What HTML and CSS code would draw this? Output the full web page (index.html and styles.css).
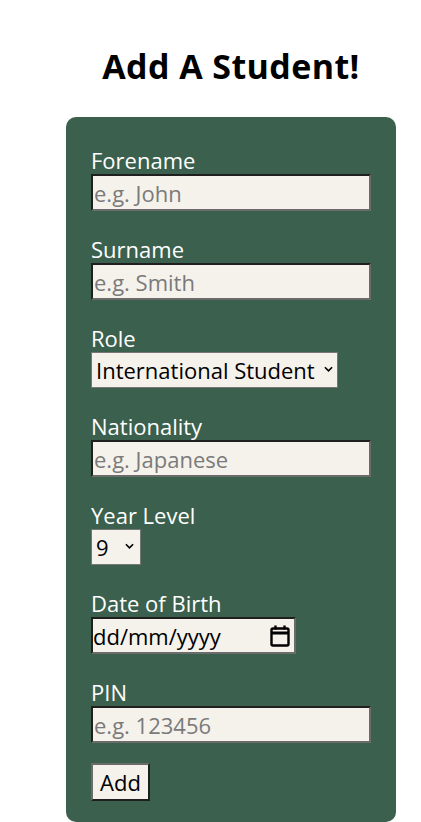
FILE: index.html
```html
<!DOCTYPE html>
<html lang="en">
<head>
<meta charset="utf-8">
<title>Add A Student!</title>
<link rel="stylesheet" href="styles.css">
</head>
<body>
<main class="page">
  <h1 class="title">Add A Student!</h1>
  <form class="card">
    <div class="field">
      <label class="label" for="fn">Forename</label>
      <input class="text" id="fn" type="text" placeholder="e.g. John">
    </div>
    <div class="field">
      <label class="label" for="sn">Surname</label>
      <input class="text" id="sn" type="text" placeholder="e.g. Smith">
    </div>
    <div class="field">
      <label class="label" for="role">Role</label>
      <div class="select role">
        <span>International Student</span>
        <svg class="chev" viewBox="0 0 10 6" width="9" height="6"><path d="M1 1l4 4 4-4" fill="none" stroke="#000" stroke-width="1.8"/></svg>
      </div>
    </div>
    <div class="field">
      <label class="label" for="nat">Nationality</label>
      <input class="text" id="nat" type="text" placeholder="e.g. Japanese">
    </div>
    <div class="field">
      <label class="label">Year Level</label>
      <div class="select year">
        <span>9</span>
        <svg class="chev" viewBox="0 0 10 6" width="9" height="6"><path d="M1 1l4 4 4-4" fill="none" stroke="#000" stroke-width="1.8"/></svg>
      </div>
    </div>
    <div class="field">
      <label class="label">Date of Birth</label>
      <div class="date">
        <span>dd/mm/yyyy</span>
        <svg class="cal" viewBox="0 0 20 22" width="20" height="22"><rect x="1.5" y="3.5" width="17" height="17" rx="1.5" fill="none" stroke="#000" stroke-width="2.4"/><path d="M1.5 8h17" stroke="#000" stroke-width="3"/><path d="M5.5 0.5v4M14.5 0.5v4" stroke="#000" stroke-width="2.4"/></svg>
      </div>
    </div>
    <div class="field">
      <label class="label" for="pin">PIN</label>
      <input class="text" id="pin" type="text" placeholder="e.g. 123456">
    </div>
    <button class="btn" type="button">Add</button>
  </form>
</main>
</body>
</html>
```
FILE: styles.css
```css
* { box-sizing: border-box; }
html, body { margin: 0; padding: 0; background: #fff; }
body { font-family: "Open Sans", "Noto Sans", sans-serif; }
.page {
  width: 330px;
  margin-left: 66px;
  display: flex;
  flex-direction: column;
  align-items: center;
}
.title {
  margin: 44px 0 0;
  height: 73px;
  font-size: 34px;
  line-height: 44px;
  font-weight: 700;
  color: #000;
  letter-spacing: 0.4px;
}
.card {
  width: 330px;
  min-height: 705px;
  background: #3b604d;
  border-radius: 10px;
  padding: 29px 25px 20px;
  display: flex;
  flex-direction: column;
  align-items: flex-start;
  gap: 24px;
}
.field { display: flex; flex-direction: column; align-items: flex-start; }
.label {
  color: #fff;
  font-size: 22px;
  line-height: 28px;
}
.text {
  width: 280px;
  height: 37px;
  margin: 0;
  padding: 0 1px;
  background: #f5f2ec;
  border: 2px solid;
  border-color: #1f1f1f #6b6b6b #6b6b6b #1f1f1f;
  font-family: inherit;
  font-size: 22px;
  color: #000;
  outline: none;
}
.text::placeholder { color: #7a7a7a; }
.select {
  height: 36px;
  background: #f5f2ec;
  border: 1px solid #767676;
  display: flex;
  align-items: center;
  justify-content: space-between;
  padding: 0 4px 0 4px;
  font-size: 22px;
  color: #000;
  white-space: nowrap;
}
.role { width: 247px; }
.year { width: 50px; padding-right: 6px; }
.chev { flex: none; margin-top: -2px; }
.date {
  width: 205px;
  height: 37px;
  background: #f5f2ec;
  border: 2px solid;
  border-color: #1f1f1f #6b6b6b #6b6b6b #1f1f1f;
  display: flex;
  align-items: center;
  justify-content: space-between;
  padding: 0 4px 0 0;
  font-size: 22px;
  color: #000;
}
.cal { flex: none; }
.btn {
  margin-top: -4px;
  height: 38px;
  width: 59px;
  padding: 0;
  background: #f5f2ec;
  border: 2px solid;
  border-color: #6b6b6b #1f1f1f #1f1f1f #6b6b6b;
  font-family: inherit;
  font-size: 22px;
  color: #000;
}
```
